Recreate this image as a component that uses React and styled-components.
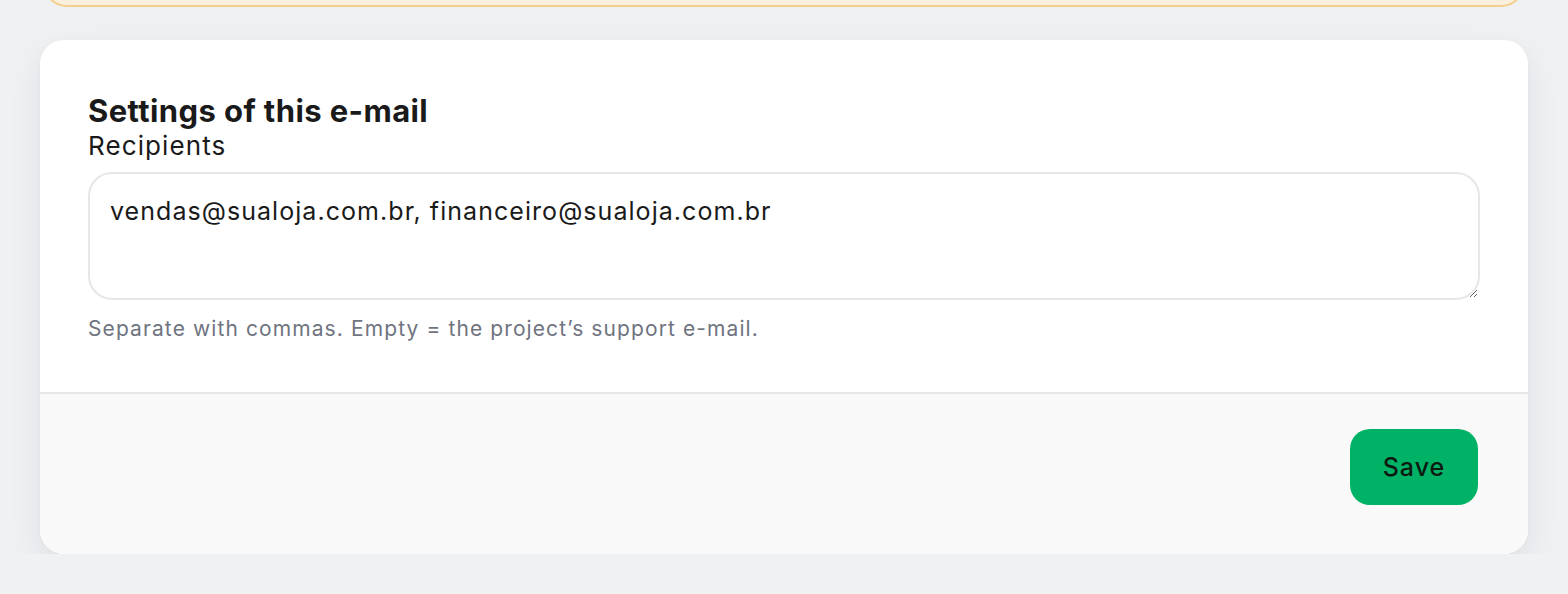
import React from "react";
import styled, { createGlobalStyle } from "styled-components";

const Global = createGlobalStyle`
  html, body { margin: 0; padding: 0; background: #f0f1f3; }
  body { font-family: Inter, "Noto Sans", "Liberation Sans", sans-serif; color: #1a1a1a; overflow: hidden; }
`;

const Page = styled.div`
  padding: 0 40px;
`;

const Notice = styled.div`
  height: 60px;
  margin: -57px 3px 0;
  background: #fbefdd;
  border: 2px solid #f3cf8c;
  border-radius: 24px;
`;

const Card = styled.section`
  margin-top: 33px;
  background: #ffffff;
  border-radius: 24px;
  overflow: hidden;
  box-shadow: 0 12px 34px rgba(20, 30, 50, 0.08), 0 1px 3px rgba(20, 30, 50, 0.04);
`;

const Body = styled.div`
  padding: 52px 48px 47px;
  display: flex;
  flex-direction: column;
`;

const Title = styled.h2`
  margin: 0;
  font-size: 31px;
  line-height: 38px;
  font-weight: 700;
  letter-spacing: 0.4px;
  color: #1a1a1a;
`;

const Label = styled.label`
  font-size: 26px;
  line-height: 32px;
  font-weight: 400;
  letter-spacing: 1.1px;
  color: #1a1a1a;
  margin-bottom: 10px;
`;

const TextArea = styled.textarea`
  box-sizing: border-box;
  width: 100%;
  height: 128px;
  padding: 18px 20px;
  border: 2px solid #e6e7e8;
  border-radius: 24px;
  font-family: inherit;
  font-size: 25px;
  line-height: 39px;
  letter-spacing: 1.05px;
  color: #1a1a1a;
  background: #fff;
  outline: none;
  resize: vertical;
`;

const Hint = styled.p`
  margin: 12px 0 0;
  font-size: 21px;
  line-height: 33px;
  letter-spacing: 1.1px;
  color: #6f7480;
`;

const Footer = styled.div`
  border-top: 2px solid #e6e7e8;
  background: #f9f9f9;
  padding: 35px 50px 49px;
  display: flex;
  justify-content: flex-end;
`;

const Button = styled.button`
  width: 128px;
  height: 76px;
  border: none;
  border-radius: 20px;
  background: #00b265;
  color: #0d1a12;
  font-family: inherit;
  font-size: 25px;
  font-weight: 500;
  letter-spacing: 1px;
  cursor: pointer;
`;

export default function App() {
  return (
    <>
      <Global />
      <Page>
        <Notice />
        <Card>
          <Body>
            <Title>Settings of this e-mail</Title>
            <Label htmlFor="recipients">Recipients</Label>
            <TextArea
              id="recipients"
              defaultValue="vendas@sualoja.com.br, financeiro@sualoja.com.br"
            />
            <Hint>Separate with commas. Empty = the project’s support e-mail.</Hint>
          </Body>
          <Footer>
            <Button>Save</Button>
          </Footer>
        </Card>
      </Page>
    </>
  );
}
